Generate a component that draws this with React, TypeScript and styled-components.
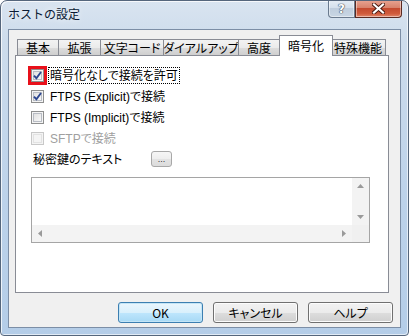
import styled, { createGlobalStyle } from "styled-components";

const GlobalStyle = createGlobalStyle`
  html, body {
    margin: 0;
    padding: 0;
    background: #ffffff;
  }
  body {
    font-family: "Liberation Sans", "Noto Sans CJK JP", sans-serif;
    font-size: 12px;
    font-feature-settings: "palt";
  }
`;

const Window = styled.div`
  width: 409px;
  height: 336px;
  box-sizing: border-box;
  display: flex;
  flex-direction: column;
  padding: 0 7px 7px 7px;
  border: 1px solid #55667c;
  border-radius: 7px 7px 4px 4px;
  background: linear-gradient(180deg, #d9e4f0 0%, #cddcec 12%, #bcd2ea 60%, #b4cde8 100%);
  box-shadow: inset 1px 1px 0 rgba(255, 255, 255, 0.75), inset -1px -1px 0 rgba(255, 255, 255, 0.6);
  overflow: hidden;
`;

const TitleBar = styled.div`
  height: 28px;
  display: flex;
  justify-content: space-between;
  align-items: flex-start;
`;

const Title = styled.div`
  font-family: "Noto Sans CJK JP", sans-serif;
  font-feature-settings: normal;
  font-size: 12px;
  line-height: 14px;
  color: #0b1a33;
  padding-top: 6px;
  text-shadow: 0 0 6px rgba(255, 255, 255, 0.9);
`;

const CaptionButtons = styled.div`
  display: flex;
  margin-top: -1px;
  margin-right: -1px;
`;

const CaptionButton = styled.div<{ $close?: boolean }>`
  width: ${(p) => (p.$close ? "47px" : "27px")};
  height: 18px;
  box-sizing: border-box;
  display: flex;
  align-items: center;
  justify-content: center;
  border: 1px solid ${(p) => (p.$close ? "#5a2a22" : "#6a7a8e")};
  border-top: none;
  border-radius: ${(p) => (p.$close ? "0 0 4px 0" : "0 0 0 4px")};
  background: ${(p) =>
    p.$close
      ? "linear-gradient(180deg, #e8a593 0%, #d8826c 45%, #c44a2f 50%, #d05b3c 80%, #e0866a 100%)"
      : "linear-gradient(180deg, #e6edf5 0%, #d5e0ec 45%, #bfcddd 50%, #c9d6e4 100%)"};
  box-shadow: inset 0 0 0 1px rgba(255, 255, 255, 0.45);
`;

const HelpGlyph = styled.span`
  font-family: "DejaVu Sans", sans-serif;
  font-weight: bold;
  font-size: 12px;
  line-height: 12px;
  color: #ffffff;
  text-shadow: 0 0 1px #3a4658, 0 0 1px #3a4658, 0 0 1px #3a4658;
`;

const Client = styled.div`
  flex: 1;
  display: flex;
  flex-direction: column;
  background: #f0f0f0;
  border: 1px solid #7c8ea6;
  padding: 5px 7px 0 6px;
`;

const TabControl = styled.div`
  display: flex;
  flex-direction: column;
  margin-right: 4px;
`;

const TabStrip = styled.div`
  display: flex;
  align-items: flex-end;
  height: 21px;
  padding-left: 2px;
  margin-bottom: -1px;
  position: relative;
  z-index: 1;
`;

const Tab = styled.div<{ $w: number; $active?: boolean }>`
  width: ${(p) => p.$w}px;
  box-sizing: border-box;
  height: ${(p) => (p.$active ? "21px" : "16px")};
  margin: ${(p) => (p.$active ? "0 -2px" : "0 0 1px 0")};
  border: 1px solid #898c95;
  border-bottom: none;
  position: relative;
  z-index: ${(p) => (p.$active ? 2 : 1)};
  display: flex;
  align-items: center;
  justify-content: center;
  padding-top: ${(p) => (p.$active ? "0" : "1px")};
  white-space: nowrap;
  font-family: "Noto Sans CJK JP", sans-serif;
  font-size: 12px;
  line-height: 14px;
  color: #000000;
  background: ${(p) =>
    p.$active ? "#ffffff" : "linear-gradient(180deg, #f3f3f3 0%, #ebebeb 50%, #dddddd 51%, #cfcfcf 100%)"};
  & + & {
    margin-left: ${(p) => (p.$active ? "-2px" : "-1px")};
  }
`;

const Panel = styled.div`
  height: 238px;
  box-sizing: border-box;
  border: 1px solid #898c95;
  background: #ffffff;
  display: flex;
  flex-direction: column;
  padding: 10px 0 0 15px;
`;

const Row = styled.div<{ $disabled?: boolean }>`
  height: 18px;
  display: flex;
  align-items: center;
  gap: 4px;
  color: ${(p) => (p.$disabled ? "#a0a0a0" : "#000000")};
  line-height: 14px;
  & + & {
    margin-top: 3px;
  }
`;

const Box = styled.div<{ $disabled?: boolean; $marked?: boolean }>`
  width: 13px;
  height: 13px;
  box-sizing: border-box;
  border: 1px solid ${(p) => (p.$disabled ? "#c8c8c8" : "#8e8f8f")};
  background: ${(p) =>
    p.$disabled
      ? "#f4f4f4"
      : "linear-gradient(135deg, #dcdcdc 0%, #eeeeee 55%, #ffffff 100%)"};
  box-shadow: inset 0 0 0 1px #f4f4f4,
    inset 0 0 0 2px ${(p) => (p.$disabled ? "#e2e2e2" : "#b8bcc4")};
  display: flex;
  align-items: center;
  justify-content: center;
  flex-shrink: 0;
  outline: ${(p) => (p.$marked ? "3px solid #e8101a" : "none")};
  outline-offset: 0px;
`;

const Label = styled.span<{ $focus?: boolean; $w?: number }>`
  border: 1px dotted ${(p) => (p.$focus ? "#000000" : "transparent")};
  padding: 1px 1px 0 1px;
  white-space: nowrap;
  width: ${(p) => (p.$w ? `${p.$w}px` : "auto")};
`;

const SmallButton = styled.div`
  width: 21px;
  height: 16px;
  box-sizing: border-box;
  border: 1px solid #a8a8a8;
  border-radius: 3px;
  background: linear-gradient(180deg, #f6f6f6 0%, #eeeeee 50%, #e3e3e3 51%, #dcdcdc 100%);
  font-size: 9px;
  line-height: 10px;
  color: #333333;
  display: flex;
  align-items: flex-end;
  justify-content: center;
  padding-bottom: 2px;
`;

const TextBox = styled.div`
  width: 339px;
  height: 66px;
  box-sizing: border-box;
  margin-top: 9px;
  border: 1px solid #a5a5a5;
  display: grid;
  grid-template-columns: 1fr 17px;
  grid-template-rows: 1fr 17px;
  background: #ffffff;
`;

const ScrollTrack = styled.div<{ $vertical?: boolean }>`
  background: #f3f3f3;
  display: flex;
  flex-direction: ${(p) => (p.$vertical ? "column" : "row")};
  justify-content: space-between;
  align-items: center;
  padding: ${(p) => (p.$vertical ? "6px 0" : "0 6px")};
`;

const Corner = styled.div`
  background: #f0f0f0;
`;

const Arrow = styled.svg`
  display: block;
`;

const ButtonRow = styled.div`
  display: flex;
  justify-content: flex-end;
  gap: 10px;
  margin-top: 9px;
`;

const DialogButton = styled.div<{ $default?: boolean }>`
  width: 85px;
  height: 21px;
  box-sizing: border-box;
  border: 1px solid ${(p) => (p.$default ? "#3c7fb1" : "#707070")};
  border-radius: 3px;
  display: flex;
  align-items: center;
  justify-content: center;
  font-family: "Noto Sans CJK JP", sans-serif;
  font-size: 12px;
  line-height: 14px;
  color: #000000;
  background: ${(p) =>
    p.$default
      ? "linear-gradient(180deg, #eaf6fd 0%, #d9f0fc 50%, #bee6fd 51%, #a7d9f5 100%)"
      : "linear-gradient(180deg, #f2f2f2 0%, #ebebeb 50%, #dddddd 51%, #cfcfcf 100%)"};
  box-shadow: inset 0 0 0 1px ${(p) => (p.$default ? "#c4e5f6" : "#fcfcfc")};
`;

const Check = () => (
  <svg width="9" height="9" viewBox="0 0 9 9">
    <path d="M1 4.6 L3.4 7.2 L8 1" fill="none" stroke="#2c4690" strokeWidth="1.9" />
  </svg>
);

const CheckBox = ({
  checked,
  disabled,
  marked,
}: {
  checked?: boolean;
  disabled?: boolean;
  marked?: boolean;
}) => (
  <Box $disabled={disabled} $marked={marked}>
    {checked && <Check />}
  </Box>
);

const tabs = [
  { label: "基本", w: 42 },
  { label: "拡張", w: 43 },
  { label: "文字コード", w: 64 },
  { label: "ダイアルアップ", w: 76 },
  { label: "高度", w: 42 },
  { label: "暗号化", w: 54, active: true },
  { label: "特殊機能", w: 56 },
];

export default function App() {
  return (
    <>
      <GlobalStyle />
      <Window>
        <TitleBar>
          <Title>ホストの設定</Title>
          <CaptionButtons>
            <CaptionButton>
              <HelpGlyph>?</HelpGlyph>
            </CaptionButton>
            <CaptionButton $close>
              <svg width="13" height="11" viewBox="0 0 13 11">
                <path
                  d="M2 1.5 L11 9.5 M11 1.5 L2 9.5"
                  stroke="#4a1a12"
                  strokeWidth="4"
                  strokeLinecap="square"
                />
                <path
                  d="M2 1.5 L11 9.5 M11 1.5 L2 9.5"
                  stroke="#ffffff"
                  strokeWidth="2.2"
                  strokeLinecap="square"
                />
              </svg>
            </CaptionButton>
          </CaptionButtons>
        </TitleBar>
        <Client>
          <TabControl>
            <TabStrip>
              {tabs.map((t) => (
                <Tab key={t.label} $w={t.w} $active={t.active}>
                  {t.label}
                </Tab>
              ))}
            </TabStrip>
            <Panel>
              <Row>
                <CheckBox checked marked />
                <Label $focus>暗号化なしで接続を許可</Label>
              </Row>
              <Row>
                <CheckBox checked />
                <Label>FTPS (Explicit)で接続</Label>
              </Row>
              <Row>
                <CheckBox />
                <Label>FTPS (Implicit)で接続</Label>
              </Row>
              <Row $disabled>
                <CheckBox disabled />
                <Label>SFTPで接続</Label>
              </Row>
              <Row>
                <Label $w={112}>秘密鍵のテキスト</Label>
                <SmallButton>...</SmallButton>
              </Row>
              <TextBox>
                <div />
                <ScrollTrack $vertical>
                  <Arrow width="7" height="4" viewBox="0 0 7 4">
                    <path d="M0 4 L3.5 0 L7 4 Z" fill="#9a9a9a" />
                  </Arrow>
                  <Arrow width="7" height="4" viewBox="0 0 7 4">
                    <path d="M0 0 L3.5 4 L7 0 Z" fill="#9a9a9a" />
                  </Arrow>
                </ScrollTrack>
                <ScrollTrack>
                  <Arrow width="4" height="7" viewBox="0 0 4 7">
                    <path d="M4 0 L0 3.5 L4 7 Z" fill="#9a9a9a" />
                  </Arrow>
                  <Arrow width="4" height="7" viewBox="0 0 4 7">
                    <path d="M0 0 L4 3.5 L0 7 Z" fill="#9a9a9a" />
                  </Arrow>
                </ScrollTrack>
                <Corner />
              </TextBox>
            </Panel>
          </TabControl>
          <ButtonRow>
            <DialogButton $default>OK</DialogButton>
            <DialogButton>キャンセル</DialogButton>
            <DialogButton>ヘルプ</DialogButton>
          </ButtonRow>
        </Client>
      </Window>
    </>
  );
}
